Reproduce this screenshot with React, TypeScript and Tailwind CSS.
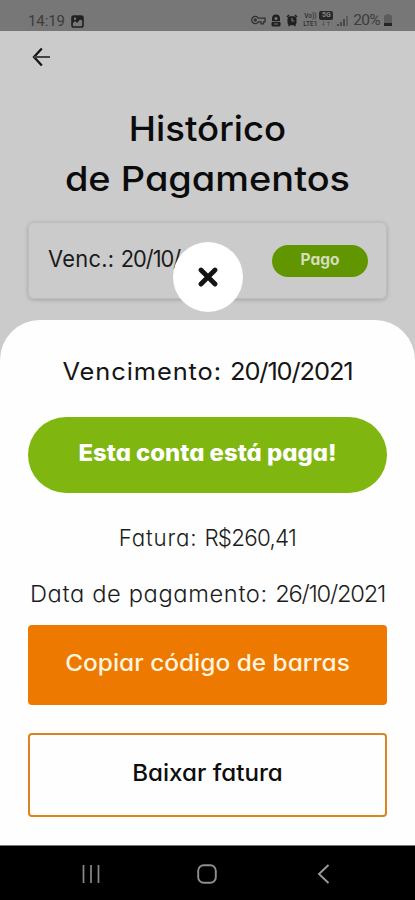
import React from 'react';

const StatusBar = () => (
  <header className="h-[31px] shrink-0 bg-[#777777] text-[#3c3c3c] flex items-end justify-between pl-7 pr-[23px] pb-[2px]">
    <div className="flex items-center gap-[6px]">
      <span className="font-[Roboto] text-[15px] leading-4 tracking-[-0.1px]">14:19</span>
      <svg width="13" height="13" viewBox="0 0 13 13" className="text-[#202020]">
        <rect x="1" y="1" width="11" height="11" rx="1.8" fill="none" stroke="currentColor" strokeWidth="1.6" />
        <path d="M1 1h11v5L9 4.5 6 8 4 6 1 9z" fill="currentColor" />
        <circle cx="4" cy="3.8" r="1.2" fill="#777777" />
      </svg>
    </div>
    <div className="flex items-center text-[#303030]">
      <svg width="15" height="10" viewBox="0 0 15 10" fill="none" stroke="currentColor" strokeWidth="1.3">
        <path d="M7.4 3.2a3.6 3.6 0 1 0 0 3.6H10v2h2.5v-2H14V3.2z" />
        <circle cx="4.3" cy="5" r="1" />
      </svg>
      <svg width="10" height="13" viewBox="0 0 10 13" className="ml-[5px]" fill="#202020">
        <path d="M5 0.5a4 4 0 0 1 4 4V7H1V4.5a4 4 0 0 1 4-4z" />
        <rect x="0.5" y="7.8" width="9" height="4.7" rx="1.5" />
        <circle cx="5" cy="4.4" r="1.5" fill="#777777" />
        <path d="M3 10h4" stroke="#777777" />
      </svg>
      <svg width="12" height="13" viewBox="0 0 12 13" className="ml-[5px]" fill="none" stroke="#202020">
        <path d="M1 3l2-2M11 3L9 1M2.5 12l1-1M9.5 12l-1-1" strokeWidth="1.5" />
        <rect x="1.5" y="2.2" width="9" height="9" rx="3" fill="#202020" stroke="none" />
        <path d="M6 4v3h2.2" stroke="#777777" strokeWidth="1.2" />
      </svg>
      <span className="ml-[4px] w-[16px] flex flex-col font-[Roboto] text-[6.5px] leading-[8px] font-medium text-center">
        <span>Vo))</span>
        <span>LTE1</span>
      </span>
      <span className="ml-[1px] w-[14px] h-[18px] font-[Roboto] text-[7px] leading-[9px] font-bold text-center">
        <span className="block h-[9px] rounded-[2px] bg-[#282828] text-[#858585]">5G</span>
        <svg width="14" height="5" viewBox="0 0 14 5" className="mt-px" stroke="#5a5a5a" fill="none">
          <path d="M4.5 0v4M3 3l1.5 1.5L6 3M9.5 5V1M8 2l1.5-1.5L11 2" />
        </svg>
      </span>
      <svg width="11" height="11" viewBox="0 0 11 11" className="ml-[4px]" stroke="#3c3c3c" strokeWidth="1.6">
        <path d="M1 11V9M4 11V7M7 11V4" />
        <path d="M10 11V1" stroke="#555555" />
      </svg>
      <span className="ml-[5px] font-[Roboto] text-[15.5px] leading-4 text-[#3c3c3c] tracking-[-0.7px]">20%</span>
      <svg width="8" height="12" viewBox="0 0 8 12" className="ml-[4px]">
        <path d="M2.5 0h3v1.2H8V12H0V1.2h2.5z" fill="#5c5c5c" />
        <path d="M0 9h8v3H0z" fill="#242424" />
      </svg>
    </div>
  </header>
);

const History = () => (
  <main className="h-[289px] shrink-0 px-7">
    <button className="block pt-[16px] pl-[4px]" aria-label="Voltar">
      <svg width="20" height="20" viewBox="0 0 20 20" fill="none" stroke="#151515" strokeWidth="2">
        <path d="M9.8 1.5L2 10l7.8 8.5" strokeWidth="2.3" />
        <path d="M2 10h16" stroke="#444444" />
      </svg>
    </button>
    <h1 className="mt-[37px] text-center text-[34.5px] leading-[50px] font-[450] text-[#0b0b0b]">
      <span className="block scale-x-[1.06]">Histórico</span>
      <span className="block scale-x-[1.1]">de Pagamentos</span>
    </h1>
    <div className="mt-[18px] h-[77px] rounded-[6px] border border-[#bdbdbd] shadow-[0_1px_4px_rgba(0,0,0,0.2)] flex items-start justify-between pl-[19px] pr-[18px] pt-[22px]">
      <span className="text-[23px] leading-[28px] text-[#1b1b1b] origin-left scale-x-[0.95]">
        <span className="tracking-[0.3px]">Venc.: </span>
        <span className="tracking-[-1.1px]">20/10/</span>
      </span>
      <span className="w-[96px] h-8 rounded-full bg-[#629600] text-[#d3dfbd] text-[15.5px] leading-[29px] font-bold text-center">Pago</span>
    </div>
  </main>
);

const Sheet = () => (
  <section className="relative h-[525px] shrink-0 rounded-t-[40px] bg-[#fefefe] px-7 flex flex-col text-center">
    <button className="absolute left-[173px] -top-[78px] size-[70px] rounded-full bg-white flex items-center justify-center" aria-label="Fechar">
      <svg width="20" height="20" viewBox="0 0 20 20" stroke="#141414" strokeWidth="4.8" strokeLinecap="round">
        <path d="M3 3l14 14M17 3L3 17" />
      </svg>
    </button>
    <h2 className="mt-[35px] whitespace-nowrap text-[24px] leading-[34px] text-[#151515] scale-x-[1.06]">
      <span className="tracking-[0.85px]">Vencimento: </span>
      <span className="tracking-[-1.05px]">20/10/2021</span>
    </h2>
    <p className="mt-[28px] h-[76px] rounded-full bg-[#80b610] text-white text-[23px] leading-[72px] font-extrabold whitespace-nowrap">
      <span className="block scale-x-[1.038]">Esta conta está paga!</span>
    </p>
    <p className="mt-[28px] text-[23px] leading-[34px] font-light text-[#1c1c1c] scale-x-[0.973]">
      <span className="tracking-[0.8px]">Fatura: </span>
      <span className="tracking-[-0.75px]">R$260,41</span>
    </p>
    <p className="mt-[22px] text-[23px] leading-[34px] font-light text-[#1c1c1c] whitespace-nowrap scale-x-[1.03]">
      <span className="tracking-[0.6px]">Data de pagamento: </span>
      <span className="tracking-[-1.2px]">26/10/2021</span>
    </p>
    <button className="mt-[14px] h-[80px] shrink-0 rounded-[4px] bg-[#ed7900] text-[#fff5df] text-[23px] leading-[76px] font-[550] whitespace-nowrap">
      <span className="block -mt-1 scale-x-[1.062]">Copiar código de barras</span>
    </button>
    <button className="mt-[28px] h-[84px] shrink-0 rounded-[4px] border-2 border-[#dc8422] text-[23px] leading-[76px] font-[450] text-[#0d0d0d]">
      <span className="block -mt-1 scale-x-[1.05]">Baixar fatura</span>
    </button>
  </section>
);

const NavBar = () => (
  <nav className="h-[55px] shrink-0 bg-black border-t border-[#777777] flex items-center justify-between pl-[82px] pr-[85px] pt-[2px]">
    <svg width="18" height="18" viewBox="0 0 18 18" stroke="#8a8a8a" strokeWidth="1.7">
      <path d="M1.5 0v18M9 0v18M16.5 0v18" />
    </svg>
    <svg width="20" height="20" viewBox="0 0 20 20" fill="none" stroke="#8f8f8f" strokeWidth="1.9" className="-ml-[3px]">
      <rect x="1.2" y="1.2" width="17.6" height="17.6" rx="5.5" />
    </svg>
    <svg width="13" height="20" viewBox="0 0 13 20" fill="none" stroke="#9a9a9a" strokeWidth="1.9">
      <path d="M11.5 1L2 10l9.5 9" />
    </svg>
  </nav>
);

export default function App() {
  return (
    <div className="w-[415px] h-[900px] overflow-hidden bg-[#cbcbcb] flex flex-col font-[Inter,'Open_Sans',sans-serif] [font-feature-settings:'cv11']">
      <StatusBar />
      <History />
      <Sheet />
      <NavBar />
    </div>
  );
}
